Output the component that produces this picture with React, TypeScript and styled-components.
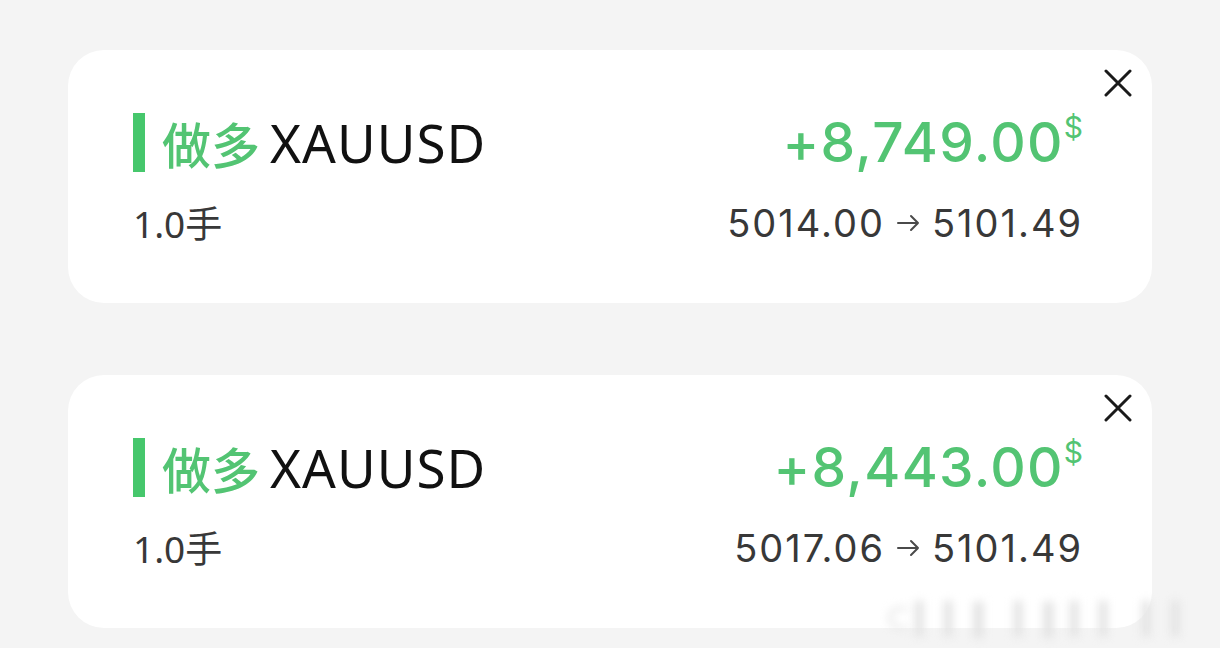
import React from "react";
import styled, { createGlobalStyle } from "styled-components";

const GlobalStyle = createGlobalStyle`
  html, body { margin: 0; padding: 0; background: #f4f4f4; }
  body { font-family: "Noto Sans", "Noto Sans CJK SC", sans-serif; }
`;

const Page = styled.div`
  width: 1220px;
  height: 648px;
  box-sizing: border-box;
  padding: 50px 68px 0 68px;
  display: flex;
  flex-direction: column;
  gap: 72px;
  position: relative;
  overflow: hidden;
`;

const Card = styled.div`
  position: relative;
  height: 253px;
  box-sizing: border-box;
  background: #ffffff;
  border-radius: 36px;
  padding: 63px 69px 0 65px;
  display: flex;
  flex-direction: column;
  gap: 32px;
`;

const Row = styled.div`
  display: flex;
  justify-content: space-between;
  align-items: center;
`;

const Title = styled.div`
  display: flex;
  align-items: center;
  height: 59px;
`;

const Bar = styled.span`
  width: 12px;
  height: 59px;
  background: #46c76c;
  margin-right: 17px;
`;

const Side = styled.span`
  font-family: "Noto Sans CJK SC", sans-serif;
  font-size: 49px;
  font-weight: 500;
  color: #53c473;
  margin-right: 10px;
  line-height: 1;
`;

const Symbol = styled.span`
  font-family: "Noto Sans", sans-serif;
  font-size: 53px;
  letter-spacing: 1px;
  color: #111;
  line-height: 1;
`;

const Profit = styled.div`
  font-family: Inter, sans-serif;
  font-size: 55px;
  font-weight: 450;
  letter-spacing: 1.3px;
  color: #53c473;
  line-height: 1;
  display: flex;
  align-items: flex-start;
`;

const Currency = styled.sup`
  font-size: 30px;
  font-weight: 400;
  letter-spacing: 0;
  vertical-align: top;
  margin-left: 0;
  margin-top: -3px;
  line-height: 1;
`;

const Lots = styled.div`
  font-family: "Noto Sans", "Noto Sans CJK SC", sans-serif;
  font-size: 37px;
  color: #383838;
  line-height: 1;
`;

const Prices = styled.div`
  font-family: Inter, sans-serif;
  font-size: 38px;
  letter-spacing: 2px;
  color: #383838;
  line-height: 1;
  display: flex;
  align-items: center;
  gap: 11px;
`;

const Close = styled.button`
  position: absolute;
  top: 19px;
  right: 20px;
  width: 28px;
  height: 28px;
  padding: 0;
  border: none;
  background: transparent;
  display: flex;
  cursor: pointer;
`;

const Watermark = styled.div`
  position: absolute;
  right: 20px;
  bottom: 10px;
  font-family: "Noto Sans", sans-serif;
  font-size: 30px;
  color: #e4e4e4;
  filter: blur(4px);
  letter-spacing: 6px;
`;

const XIcon = () => (
  <svg width="28" height="28" viewBox="0 0 28 28" fill="none">
    <path d="M2 2 L26 26 M26 2 L2 26" stroke="#1a1a1a" strokeWidth="3" strokeLinecap="round" />
  </svg>
);

const ArrowIcon = () => (
  <svg width="25" height="18" viewBox="0 0 25 18" fill="none">
    <path d="M2 9 H22 M15 2 L22 9 L15 16" stroke="#4a4a4a" strokeWidth="2" strokeLinecap="round" strokeLinejoin="round" />
  </svg>
);

type Trade = { profit: string; open: string; close: string };

const trades: Trade[] = [
  { profit: "+8,749.00", open: "5014.00", close: "5101.49" },
  { profit: "+8,443.00", open: "5017.06", close: "5101.49" },
];

export default function App() {
  return (
    <>
      <GlobalStyle />
      <Page>
        {trades.map((t, i) => (
          <Card key={i}>
            <Close aria-label="close"><XIcon /></Close>
            <Row>
              <Title>
                <Bar />
                <Side>做多</Side>
                <Symbol>XAUUSD</Symbol>
              </Title>
              <Profit>
                {t.profit}
                <Currency>$</Currency>
              </Profit>
            </Row>
            <Row>
              <Lots>1.0手</Lots>
              <Prices>
                <span>{t.open}</span>
                <ArrowIcon />
                <span>{t.close}</span>
              </Prices>
            </Row>
          </Card>
        ))}
        <Watermark>ᑕ▍▍▌ ▍▌▍▍ ▍▍</Watermark>
      </Page>
    </>
  );
}
